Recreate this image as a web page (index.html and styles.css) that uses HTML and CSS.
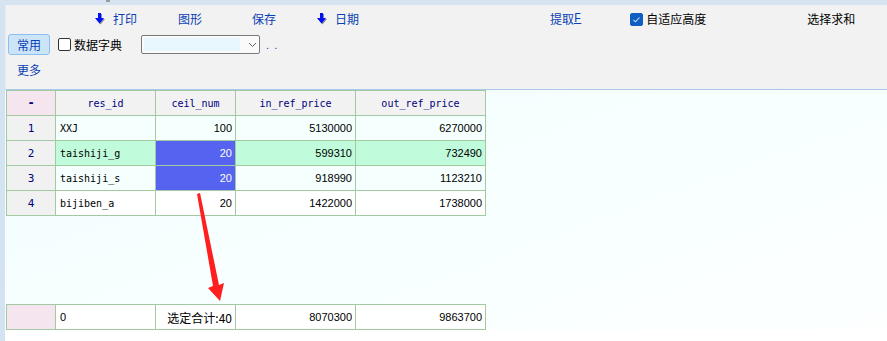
FILE: index.html
```html
<!DOCTYPE html>
<html lang="zh">
<head>
<meta charset="utf-8">
<link rel="stylesheet" href="styles.css">
</head>
<body>
<div class="app">
  <div class="topstrip"><span class="tick"></span></div>
  <div class="main">
    <div class="side"></div>
    <div class="content">
      <div class="toolbar">
        <div class="row row1">
          <span class="item it-print"><svg class="darr" width="10" height="12" viewBox="0 0 10 12"><path d="M4 1h3v5h3l-4.5 5.5L1 6h3z" fill="#8a8a8a"/><path d="M3 0h3v5h3L4.5 10.5 0 5h3z" fill="#0010ff"/></svg><span class="lnk">打印</span></span>
          <span class="item it-graph lnk">图形</span>
          <span class="item it-save lnk">保存</span>
          <span class="item it-date"><svg class="darr" width="10" height="12" viewBox="0 0 10 12"><path d="M4 1h3v5h3l-4.5 5.5L1 6h3z" fill="#8a8a8a"/><path d="M3 0h3v5h3L4.5 10.5 0 5h3z" fill="#0010ff"/></svg><span class="lnk">日期</span></span>
          <span class="item it-fetch lnk">提取<span class="f">F</span></span>
          <span class="item it-auto"><span class="cb checked"><svg width="13" height="13" viewBox="0 0 13 13"><path d="M3.5 6.8l2 2 4-4.3" fill="none" stroke="#cfe0f5" stroke-width="1.1"/></svg></span><span class="blk">自适应高度</span></span>
          <span class="item it-sum blk">选择求和</span>
        </div>
        <div class="row row2">
          <span class="btn">常用</span>
          <span class="item it-dict"><span class="cb"></span><span class="blk">数据字典</span></span>
          <span class="select"><span class="sel-inner"></span><svg class="chev" width="9" height="6" viewBox="0 0 9 6"><path d="M1 1l3.5 3.5L8 1" fill="none" stroke="#666" stroke-width="1"/></svg></span>
          <span class="dots">. .</span>
        </div>
        <div class="row row3">
          <span class="lnk more">更多</span>
        </div>
      </div>
      <div class="grid-area">
        <div class="grid">
          <div class="c corner">-</div><div class="c hd">res_id</div><div class="c hd">ceil_num</div><div class="c hd">in_ref_price</div><div class="c hd">out_ref_price</div>

          <div class="c rn">1</div><div class="c tx az">XXJ</div><div class="c num az">100</div><div class="c num az">5130000</div><div class="c num az">6270000</div>

          <div class="c rn">2</div><div class="c tx mint">taishiji_g</div><div class="c num sel">20</div><div class="c num mint">599310</div><div class="c num mint">732490</div>

          <div class="c rn">3</div><div class="c tx az">taishiji_s</div><div class="c num sel">20</div><div class="c num az">918990</div><div class="c num az">1123210</div>

          <div class="c rn">4</div><div class="c tx wh">bijiben_a</div><div class="c num wh">20</div><div class="c num wh">1422000</div><div class="c num wh">1738000</div>
        </div>
        <div class="grid footer">
          <div class="c corner"></div><div class="c ft">0</div><div class="c num cjk wh">选定合计:40</div><div class="c num wh">8070300</div><div class="c num wh">9863700</div>
        </div>
        <div class="bottom"></div>
      </div>
    </div>
  </div>
  <svg class="arrow" width="887" height="341" viewBox="0 0 887 341"><polygon points="197,194 200,193 219,285 224,283 220,301 208,288 213,286" fill="#ff1f1f"/></svg>
</div>
</body>
</html>
```
FILE: styles.css
```css
* { box-sizing: border-box; }
html, body { margin: 0; padding: 0; }
body {
  width: 887px;
  height: 341px;
  overflow: hidden;
  background: #ffffff;
  font-family: "Noto Sans CJK SC", "Liberation Sans", sans-serif;
  font-size: 12px;
}
.app { position: relative; width: 887px; height: 341px; display: flex; flex-direction: column; }
.topstrip { height: 5px; background: #d6e4f1; position: relative; flex: none; }
.tick { position: absolute; left: 106px; top: 0; width: 4px; height: 2px; background: #9a9a9a; }
.main { flex: 1; display: flex; }
.side { width: 5px; background: #d4e3f1; flex: none; }
.content { flex: 1; display: flex; flex-direction: column; }

.toolbar {
  height: 85px;
  background: #f2f2f2;
  border-bottom: 1px solid #a9c9ea;
  border-left: 1px solid #e6edf5;
  display: flex;
  flex-direction: column;
  flex: none;
}
.row { display: flex; align-items: center; }
.row1 { height: 28px; padding-left: 89px; }
.row2 { height: 23px; padding-left: 2px; }
.row3 { height: 26px; padding-left: 10px; padding-top: 2px; }

.item { display: flex; align-items: center; line-height: 14px; white-space: nowrap; }
.lnk { color: #0a3fb4; line-height: 14px; }
.blk { color: #000; line-height: 14px; }
.darr { margin-right: 8px; }
.it-graph { margin-left: 41px; }
.it-save { margin-left: 50px; }
.it-date { margin-left: 41px; }
.it-fetch { margin-left: 191px; }
.f { font-family: "Liberation Mono", monospace; font-size: 12px; text-decoration: underline; }
.it-auto { margin-left: 49px; }
.it-sum { margin-left: 101px; }

.cb {
  width: 13px; height: 13px;
  border: 1px solid #333;
  border-radius: 2px;
  background: #fff;
  margin-right: 3px;
  display: inline-block;
  flex: none;
}
.cb.checked { background: #0f5fc2; border-color: #0f5fc2; position: relative; }
.cb.checked svg { position: absolute; left: -1px; top: -1px; }

.btn {
  width: 42px; height: 21px;
  background: #cce4f7;
  border: 1px solid #8cbfee;
  border-radius: 3px;
  color: #0a3fb4;
  display: flex; align-items: center; justify-content: center;
  line-height: 14px;
}
.it-dict { margin-left: 8px; }
.select {
  margin-left: 19px;
  width: 119px; height: 19px;
  border: 1px solid #7a7a7a;
  border-radius: 2px;
  background: #fafafa;
  display: flex; align-items: center;
  padding: 2px;
}
.sel-inner { width: 96px; height: 13px; background: #e8f7fd; }
.chev { margin-left: 8px; }
.dots { margin-left: 6px; color: #0a3fb4; font-family: "Liberation Sans", sans-serif; font-size: 11px; letter-spacing: 1px; line-height: 14px; }
.more { margin-left: 1px; }

.grid-area {
  flex: 1;
  background: linear-gradient(160deg, #f3fefe 0%, #f8ffff 60%, #fdffff 100%);
  padding-left: 1px;
  display: flex; flex-direction: column;
}
.grid {
  display: grid;
  grid-template-columns: 49px 100px 80px 120px 130px;
  grid-auto-rows: 25px;
  width: 480px;
  border-left: 1px solid #a3c9a3;
  border-top: 1px solid #a3c9a3;
}
.footer { margin-top: 88px; background: #fff; }
.bottom { flex: 1; background: #fff; margin-left: -1px; }
.c {
  border-right: 1px solid #a3c9a3;
  border-bottom: 1px solid #a3c9a3;
  display: flex; align-items: center;
  white-space: nowrap;
  overflow: hidden;
}
.corner { background: #f5e5ee; justify-content: center; color: #000080; font-family: "DejaVu Sans Mono", monospace; font-size: 12px; font-weight: bold; }
.hd { background: #f2f2f2; justify-content: center; color: #000080; font-family: "DejaVu Sans Mono", monospace; font-size: 10px; }
.rn { background: #f1f1f1; justify-content: center; color: #000080; font-family: "DejaVu Sans Mono", monospace; font-size: 11px; }
.tx { padding-left: 4px; font-family: "DejaVu Sans Mono", monospace; font-size: 10px; color: #000; }
.num { justify-content: flex-end; padding-right: 3px; font-family: "Liberation Sans", sans-serif; font-size: 11px; color: #000; }
.cjk { font-family: "Noto Sans CJK SC", sans-serif; font-size: 12px; }
.ft { padding-left: 4px; background: #fff; font-family: "Liberation Sans", sans-serif; font-size: 11px; }
.az { background: #f5fffd; }
.mint { background: #c0fbdb; }
.wh { background: #ffffff; }
.sel { background: #5563f0; color: #ffffff; }

.arrow { position: absolute; left: 0; top: 0; pointer-events: none; }
```
